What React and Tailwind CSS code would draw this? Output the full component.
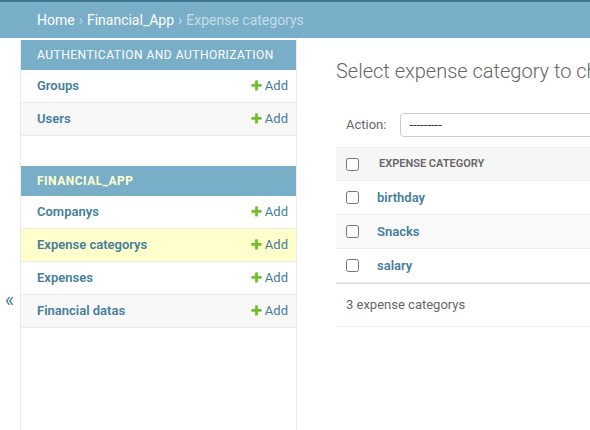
import React from "react";

function AddIcon() {
  return (
    <svg width="13" height="13" viewBox="0 0 1792 1792" className="inline-block mr-[2px] relative top-[-1px]">
      <path
        fill="#70bf2b"
        d="M1600 796v192q0 40-28 68t-68 28h-416v416q0 40-28 68t-68 28h-192q-40 0-68-28t-28-68v-416h-416q-40 0-68-28t-28-68v-192q0-40 28-68t68-28h416v-416q0-40 28-68t68-28h192q40 0 68 28t28 68v416h416q40 0 68 28t28 68z"
      />
    </svg>
  );
}

function SideRow({ name, gray, current }) {
  const bg = current ? "bg-[#ffffcc]" : gray ? "bg-[#f8f8f8]" : "bg-white";
  return (
    <div className={`flex items-center justify-between h-[33px] border-b border-[#eaeaea] ${bg}`}>
      <span className="pl-4 font-semibold text-[#447e9b]">{name}</span>
      <span className="pr-2 text-[#447e9b] flex items-center">
        <AddIcon />
        Add
      </span>
    </div>
  );
}

function Module({ title, current, rows, currentModel }) {
  return (
    <div className="mb-[30px]">
      <div
        className={`h-[30px] flex items-center pl-4 bg-[#79aec8] uppercase text-[12px] tracking-[0.5px] ${
          current ? "text-[#ffffcc] font-bold" : "text-white font-normal"
        }`}
      >
        {title}
      </div>
      {rows.map((r, i) => (
        <SideRow key={r} name={r} gray={i % 2 === 1} current={r === currentModel} />
      ))}
    </div>
  );
}

function Checkbox() {
  return <input type="checkbox" className="m-0 w-[13px] h-[13px]" />;
}

export default function App() {
  const items = ["birthday", "Snacks", "salary"];
  return (
    <div className="w-[590px] h-[430px] overflow-hidden bg-white font-['Roboto','Liberation_Sans',sans-serif] text-[13px] leading-4 text-[#333]">
      <div className="h-[2px] bg-[#417690]" />
      <div className="h-[36px] flex items-center pl-[37px] bg-[#79aec8] text-[14px] text-[#c4dce8] whitespace-nowrap">
        <span className="text-white">Home</span>
        <span className="mx-[4px]">›</span>
        <span className="text-white">Financial_App</span>
        <span className="mx-[4px]">›</span>
        <span>Expense categorys</span>
      </div>
      <div className="flex h-[392px]">
        <div className="w-[21px] shrink-0 border-r border-[#eaeaea] flex justify-center pt-[250px] pr-[1px]">
          <span className="text-[20px] leading-6 text-[#447e9b]">«</span>
        </div>
        <div className="w-[276px] shrink-0 border-r border-[#eaeaea] pt-[2px]">
          <Module title="Authentication and Authorization" rows={["Groups", "Users"]} />
          <Module
            title="Financial_App"
            current
            rows={["Companys", "Expense categorys", "Expenses", "Financial datas"]}
            currentModel="Expense categorys"
          />
        </div>
        <div className="flex-1 min-w-0 pl-[39px] pt-[21px] overflow-hidden">
          <div className="w-[700px]">
            <h1 className="text-[20px] leading-6 font-light text-[#666] mb-5 whitespace-nowrap">
              Select expense category to change
            </h1>
            <div className="h-[44px] flex items-center pl-[10px]">
              <span className="text-[#666]">Action:</span>
              <div className="ml-[14px] w-[260px] h-[24px] border border-[#cccccc] rounded-[4px] flex items-center pl-[8px] text-[#333]">
                ---------
              </div>
            </div>
            <div className="h-[34px] flex items-center bg-[#f6f6f6] border-y border-[#eeeeee]">
              <div className="w-[43px] flex items-center pl-[10px]">
                <Checkbox />
              </div>
              <span className="text-[11px] font-semibold text-[#666] uppercase">Expense category</span>
            </div>
            {items.map((it, i) => (
              <div
                key={it}
                className={`h-[34px] flex items-center border-b border-[#eeeeee] ${
                  i % 2 === 1 ? "bg-[#f9f9f9]" : "bg-white"
                }`}
              >
                <div className="w-[41px] flex items-center pl-[10px]">
                  <Checkbox />
                </div>
                <span className="font-semibold text-[#447e9b]">{it}</span>
              </div>
            ))}
            <div className="h-[44px] flex items-center pl-[10px] border-t border-b border-t-[#dddddd] border-b-[#eeeeee] text-[#666]">
              3 expense categorys
            </div>
          </div>
        </div>
      </div>
    </div>
  );
}
